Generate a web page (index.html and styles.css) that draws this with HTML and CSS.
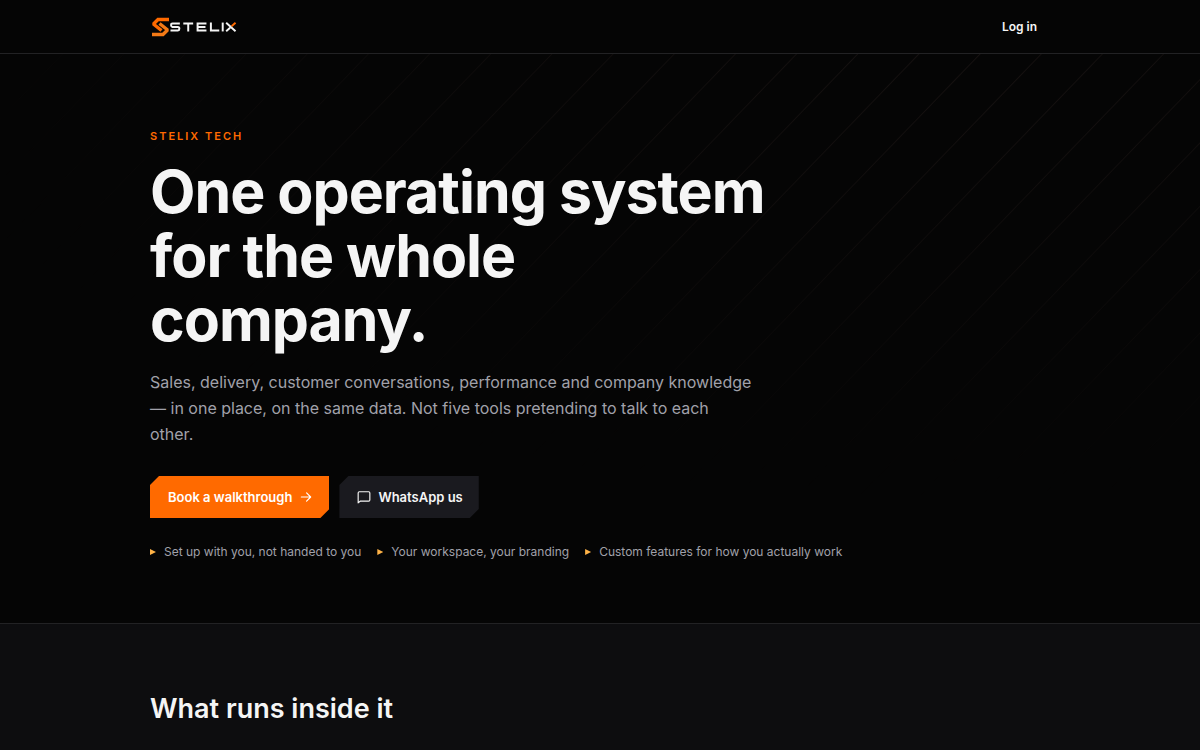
FILE: index.html
```html
<!DOCTYPE html>
<html lang="en">
<head>
    <meta charset="UTF-8">
    <meta name="viewport" content="width=device-width, initial-scale=1.0">
    <title>Stelix Tech</title>
    <link rel="stylesheet" href="styles.css">
</head>
<body>
    <header class="site-header">
        <div class="container header-row">
            <a class="logo" href="#" aria-label="Stelix home">
                <svg class="logo-mark" viewBox="0 0 20 20" fill="none" stroke-width="3.4" aria-hidden="true">
                    <path d="M19 2.500H8L4 6.500V7.500L11.500 13.500" stroke="#ff6a00"/>
                    <path d="M2 17.500H13L17 13.500V12.500L9.500 6.500" stroke="#f47a16"/>
                </svg>
                <svg class="logo-word" viewBox="0 0 68 10" fill="none" stroke="#f5f5f5" stroke-width="2" aria-hidden="true">
                    <path d="M10 1.500H2.500Q1 1.500 1 3T2.500 5H8Q9.500 5 9.500 6.700T8 8.500H.5"/>
                    <path d="M13.500 1.500h10M18.500 1.500V9.500"/>
                    <path d="M37 1.500h-9V8.500h9M28 5h8"/>
                    <path d="M41.500 .5v8H50"/>
                    <path d="M53.500 .5v9"/>
                    <path d="M57 .8l9.500 8.400M57 9.200l4-3.500"/>
                    <path d="M62.500 4.300L66.500 .8" stroke="#ff6a00"/>
                </svg>
            </a>
            <a class="login" href="#">Log in</a>
        </div>
    </header>

    <main>
        <section class="hero">
            <div class="container">
                <p class="eyebrow">STELIX TECH</p>
                <h1>One operating system for the whole company.</h1>
                <p class="lead">Sales, delivery, customer conversations, performance and company knowledge — in one place, on the same data. Not five tools pretending to talk to each other.</p>
                <div class="actions">
                    <a class="btn btn-primary" href="#">
                        Book a walkthrough
                        <svg class="icon" viewBox="0 0 24 24" aria-hidden="true"><path d="M4 12h16M13 5l7 7-7 7"/></svg>
                    </a>
                    <a class="btn btn-dark" href="#">
                        <svg class="icon" viewBox="0 0 24 24" aria-hidden="true"><path d="M2 22V5a2 2 0 0 1 2-2h16a2 2 0 0 1 2 2v12a2 2 0 0 1-2 2H6z"/></svg>
                        WhatsApp us
                    </a>
                </div>
                <ul class="points">
                    <li>Set up with you, not handed to you</li>
                    <li>Your workspace, your branding</li>
                    <li>Custom features for how you actually work</li>
                </ul>
            </div>
        </section>

        <section class="modules">
            <div class="container">
                <h2>What runs inside it</h2>
            </div>
        </section>
    </main>
</body>
</html>
```
FILE: styles.css
```css
* {
    box-sizing: border-box;
}

body {
    margin: 0;
    background: #0d0d0f;
    color: #f5f5f5;
    font-family: Inter, sans-serif;
    font-size: 16px;
}

h1, h2, p, ul {
    margin: 0;
    padding: 0;
}

a {
    color: inherit;
    text-decoration: none;
}

.container {
    max-width: 940px;
    margin: 0 auto;
    padding: 0 20px;
}

/* Header */
.site-header {
    background: #050505;
    border-bottom: 1px solid #222224;
}

.header-row {
    display: flex;
    align-items: center;
    justify-content: space-between;
    min-height: 53px;
}

.logo {
    display: flex;
    align-items: center;
}

.logo-mark {
    width: 20px;
    height: 20px;
}

.logo-word {
    width: 67px;
    height: 10px;
}

.login {
    padding: 8px 13px;
    font-size: 12px;
    font-weight: 600;
}

/* Hero */
.hero {
    position: relative;
    padding: 72px 0 61px;
    background: #050505;
    border-bottom: 1px solid #222224;
}

/* faint diagonal lines, fading out from the top right */
.hero::before {
    content: "";
    position: absolute;
    inset: 0;
    background: repeating-linear-gradient(134deg, transparent 0, rgba(255, 190, 180, 0.07) 1px, transparent 2px 44px);
    -webkit-mask-image: radial-gradient(ellipse 90% 80% at 80% 0%, #000, transparent);
    mask-image: radial-gradient(ellipse 90% 80% at 80% 0%, #000, transparent);
}

.hero .container {
    position: relative;
}

.eyebrow {
    color: #ff6a00;
    font-size: 11px;
    line-height: 20px;
    font-weight: 600;
    letter-spacing: 2px;
}

h1 {
    max-width: 640px;
    margin-top: 14px;
    font-size: 59px;
    line-height: 64px;
    font-weight: 700;
    letter-spacing: -1px;
}

.lead {
    max-width: 602px;
    margin-top: 17px;
    color: #a1a1aa;
    font-size: 16px;
    line-height: 26px;
}

.actions {
    display: flex;
    flex-wrap: wrap;
    gap: 10px;
    margin-top: 29px;
}

.btn {
    display: flex;
    align-items: center;
    gap: 7px;
    min-height: 42px;
    padding: 0 16px 0 18px;
    font-size: 13px;
    font-weight: 600;
    clip-path: polygon(9px 0, 100% 0, 100% calc(100% - 9px), calc(100% - 9px) 100%, 0 100%, 0 9px);
}

.btn-primary {
    background: #ff6a00;
    color: #fff;
}

.btn-dark {
    background: #1a1a1f;
}

.icon {
    width: 14px;
    height: 14px;
    fill: none;
    stroke: currentColor;
    stroke-width: 2;
    stroke-linecap: round;
    stroke-linejoin: round;
}

.points {
    display: flex;
    flex-wrap: wrap;
    gap: 8px 16px;
    margin-top: 24px;
    list-style: none;
    color: #a1a1aa;
    font-size: 12px;
    line-height: 20px;
}

.points li {
    display: flex;
    align-items: center;
    gap: 8px;
}

.points li::before {
    content: "";
    width: 6px;
    height: 6px;
    background: #ffb347;
    clip-path: polygon(0 0, 100% 50%, 0 100%);
}

/* Modules */
.modules {
    padding: 64px 0;
}

h2 {
    font-size: 27px;
    line-height: 42px;
    font-weight: 600;
}
```
